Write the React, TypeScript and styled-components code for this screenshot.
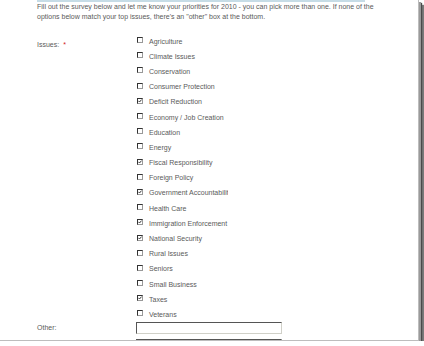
import React from 'react'
import styled, { createGlobalStyle } from 'styled-components'

const GlobalStyle = createGlobalStyle`
  html, body {
    margin: 0;
    padding: 0;
    background: #ffffff;
  }
  body {
    font-family: "Liberation Sans", Arial, sans-serif;
  }
`

interface Issue {
  label: string
  checked: boolean
}

const issues: Issue[] = [
  { label: 'Agriculture', checked: false },
  { label: 'Climate Issues', checked: false },
  { label: 'Conservation', checked: false },
  { label: 'Consumer Protection', checked: false },
  { label: 'Deficit Reduction', checked: true },
  { label: 'Economy / Job Creation', checked: false },
  { label: 'Education', checked: false },
  { label: 'Energy', checked: false },
  { label: 'Fiscal Responsibility', checked: true },
  { label: 'Foreign Policy', checked: false },
  { label: 'Government Accountability', checked: true },
  { label: 'Health Care', checked: false },
  { label: 'Immigration Enforcement', checked: true },
  { label: 'National Security', checked: true },
  { label: 'Rural Issues', checked: false },
  { label: 'Seniors', checked: false },
  { label: 'Small Business', checked: false },
  { label: 'Taxes', checked: true },
  { label: 'Veterans', checked: false },
]

const CheckBox = ({ checked }: { checked: boolean }) => (
  <S.Box>
    {checked && (
      <svg width="4" height="4" viewBox="0 0 4 4">
        <path d="M0.4 1.8 L1.5 3 L3.6 0.6" stroke="#222" strokeWidth="0.9" fill="none" />
      </svg>
    )}
  </S.Box>
)

export default function App() {
  return (
    <>
      <GlobalStyle />
      <S.Frame>
        <S.Content>
          <S.TopBar />
          <S.Intro>
            Fill out the survey below and let me know your priorities for 2010 - you can pick more than one. If none of the
            <br />
            options below match your top issues, there's an "other" box at the bottom.
          </S.Intro>
          <S.FormRow>
            <S.Label>
              Issues: <S.Required>*</S.Required>
            </S.Label>
            <S.Options>
              {issues.map(issue => (
                <S.Option key={issue.label}>
                  <CheckBox checked={issue.checked} />
                  <S.OptionText>{issue.label}</S.OptionText>
                </S.Option>
              ))}
            </S.Options>
          </S.FormRow>
          <S.OtherRow>
            <S.OtherLabel>Other:</S.OtherLabel>
            <S.Fields>
              <S.TextBox />
              <S.TextBox />
            </S.Fields>
          </S.OtherRow>
        </S.Content>
      </S.Frame>
    </>
  )
}

const S = {
  Frame: styled.div`
    width: 419px;
    height: 341px;
    background: #ffffff;
    overflow: hidden;
    box-shadow: 2px 2px 0 #9a9a9a, 3px 3px 1px #4a4a4a, 5px 5px 1px #7a7a7a;
    border-right: 1px solid #bdbdbd;
    border-bottom: 1px solid #bdbdbd;
    box-sizing: border-box;
  `,
  Content: styled.div`
    padding-left: 37px;
    color: #5a5a5a;
    font-size: 7px;
  `,
  TopBar: styled.div`
    width: 328px;
    height: 2px;
    background: #c6dce6;
  `,
  Intro: styled.p`
    margin: 0;
    line-height: 10px;
    white-space: nowrap;
  `,
  FormRow: styled.div`
    display: flex;
    margin-top: 12px;
  `,
  OtherRow: styled.div`
    display: flex;
    margin-top: -1px;
  `,
  Label: styled.div`
    width: 99px;
    flex-shrink: 0;
    line-height: 10px;
    padding-top: 6px;
  `,
  OtherLabel: styled.div`
    width: 99px;
    flex-shrink: 0;
    line-height: 10px;
    padding-top: 1px;
  `,
  Required: styled.span`
    color: #d02020;
    margin-left: 2px;
  `,
  Options: styled.div`
    width: 91px;
    overflow: hidden;
    padding-left: 1px;
  `,
  Option: styled.div`
    display: flex;
    align-items: center;
    height: 15.2px;
    white-space: nowrap;
  `,
  Box: styled.span`
    width: 6px;
    height: 6px;
    box-sizing: border-box;
    display: flex;
    align-items: center;
    justify-content: center;
    flex-shrink: 0;
    border-top: 1px solid #333;
    border-left: 1px solid #333;
    border-right: 1px solid #999;
    border-bottom: 1px solid #999;
    background: #fff;
    margin-top: -3px;
  `,
  OptionText: styled.span`
    margin-left: 6px;
    line-height: 10px;
  `,
  Fields: styled.div`
    display: flex;
    flex-direction: column;
    gap: 5px;
  `,
  TextBox: styled.div`
    width: 146px;
    height: 12px;
    box-sizing: border-box;
    border-top: 1px solid #555;
    border-left: 1px solid #555;
    border-right: 1px solid #d0d0c8;
    border-bottom: 1px solid #d0d0c8;
    background: #fff;
  `,
}
